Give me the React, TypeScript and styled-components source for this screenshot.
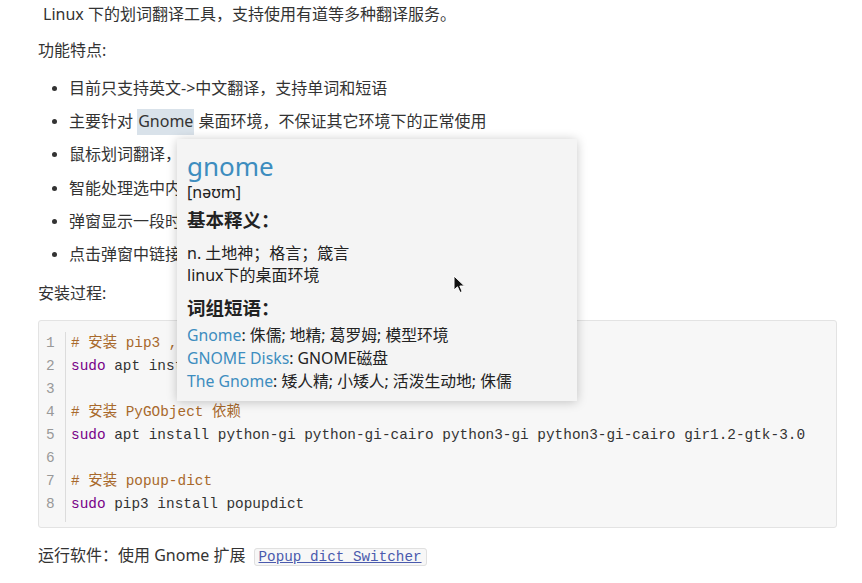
import React from "react";
import styled, { createGlobalStyle } from "styled-components";

const Global = createGlobalStyle`
  html, body { margin: 0; padding: 0; background: #ffffff; }
  body { font-family: "Noto Sans", "Noto Sans CJK SC", sans-serif; color: #333; }
`;

const Page = styled.div`
  position: relative;
  width: 862px;
  height: 583px;
  overflow: hidden;
  box-sizing: border-box;
  padding: 1px 25px 0 38px;
  font-size: 16px;
  line-height: 26px;
`;

const Para = styled.p<{ $indent?: number; $mb?: number }>`
  margin: 0 0 ${(p) => p.$mb ?? 10}px 0;
  padding-left: ${(p) => p.$indent ?? 0}px;
  white-space: pre;
`;

const List = styled.ul`
  margin: 12px 0 13px 0;
  padding-left: 31px;
  list-style: disc;
`;

const Item = styled.li`
  margin-bottom: 7.2px;
  white-space: nowrap;
  &:last-child { margin-bottom: 0; }
  &::marker { font-size: 14px; color: #333; }
`;

const Sel = styled.span`
  background: #d9e2ea;
  padding: 1px 1px 3px;
`;

const CodeBlock = styled.div`
  margin: 14px 0 14px 0;
  background: #f7f7f7;
  border: 1px solid #e3e3e3;
  border-radius: 3px;
  padding: 11px 0 11px 0;
  display: flex;
  font-family: "Liberation Mono", monospace;
  font-size: 14.4px;
  line-height: 23px;
`;

const Gutter = styled.div`
  width: 27px;
  border-right: 1px solid #dcdcdc;
  margin-bottom: -6px;
  padding-bottom: 6px;
  color: #999;
  display: flex;
  flex-direction: column;
  align-items: flex-start;
  padding-left: 7px;
  box-sizing: border-box;
`;

const Lines = styled.div`
  padding-left: 5px;
  display: flex;
  flex-direction: column;
  white-space: pre;
  color: #333;
`;

const Line = styled.div`
  height: 23px;
`;

const Comment = styled.span`
  color: #a8692c;
  font-family: "Liberation Mono", "Noto Sans CJK SC", monospace;
`;

const Kw = styled.span`
  color: #770088;
`;

const InlineCode = styled.code`
  font-family: "Liberation Mono", monospace;
  font-size: 14.3px;
  background: #f7f7f7;
  border: 1px solid #e0e0e0;
  border-radius: 3px;
  padding: 0 4px;
  margin-left: 8px;
  color: #4a5aad;
  text-decoration: underline;
`;

const Popup = styled.div`
  position: absolute;
  left: 177px;
  top: 139px;
  width: 400px;
  height: 262px;
  box-sizing: border-box;
  background: #f4f4f4;
  box-shadow: 0 1px 10px rgba(0, 0, 0, 0.22);
  padding: 0 10px;
  font-family: "Noto Sans", "Noto Sans CJK SC", sans-serif;
  color: #222;
  display: flex;
  flex-direction: column;
`;

const Word = styled.div`
  font-size: 26px;
  line-height: 30px;
  color: #3d8dbf;
  margin-top: 12px;
`;

const Phonetic = styled.div`
  font-size: 16px;
  line-height: 22px;
`;

const Heading = styled.div<{ $mt: number; $mb: number }>`
  font-size: 18.5px;
  font-weight: 700;
  line-height: 26px;
  margin-top: ${(p) => p.$mt}px;
  margin-bottom: ${(p) => p.$mb}px;
`;

const Def = styled.div`
  font-size: 16px;
  line-height: 22px;
`;

const Phrase = styled.div`
  font-size: 15.8px;
  line-height: 23px;
`;

const PhraseKey = styled.span`
  color: #3d8dbf;
`;

const Cursor = styled.svg`
  position: absolute;
  left: 453px;
  top: 275px;
`;

const codeLines: React.ReactNode[] = [
  <Comment># 安装 pip3 , 如已安装可跳过</Comment>,
  <><Kw>sudo</Kw> apt install python3-pip</>,
  "",
  <Comment># 安装 PyGObject 依赖</Comment>,
  <><Kw>sudo</Kw> apt install python-gi python-gi-cairo python3-gi python3-gi-cairo gir1.2-gtk-3.0</>,
  "",
  <Comment># 安装 popup-dict</Comment>,
  <><Kw>sudo</Kw> pip3 install popupdict</>,
];

const phrases: [string, string][] = [
  ["Gnome", ": 侏儒; 地精; 葛罗姆; 模型环境"],
  ["GNOME Disks", ": GNOME磁盘"],
  ["The Gnome", ": 矮人精; 小矮人; 活泼生动地; 侏儒"],
];

export default function App() {
  return (
    <Page>
      <Global />
      <Para $indent={5}>Linux 下的划词翻译工具，支持使用有道等多种翻译服务。</Para>
      <Para $mb={0}>功能特点:</Para>
      <List>
        <Item>目前只支持英文-&gt;中文翻译，支持单词和短语</Item>
        <Item>
          主要针对 <Sel>Gnome</Sel> 桌面环境，不保证其它环境下的正常使用
        </Item>
        <Item>鼠标划词翻译，弹窗显示翻译结果</Item>
        <Item>智能处理选中内容（去除换行、连字符、多余空格以及标点等)</Item>
        <Item>弹窗显示一段时间后自动消失</Item>
        <Item>点击弹窗中链接可打开完整释义</Item>
      </List>
      <Para $mb={0}>安装过程:</Para>
      <CodeBlock>
        <Gutter>
          {codeLines.map((_, i) => (
            <Line key={i}>{i + 1}</Line>
          ))}
        </Gutter>
        <Lines>
          {codeLines.map((l, i) => (
            <Line key={i}>{l}</Line>
          ))}
        </Lines>
      </CodeBlock>
      <Para $mb={0}>
        运行软件：使用 Gnome 扩展<InlineCode>Popup dict Switcher</InlineCode>
      </Para>

      <Popup>
        <Word>gnome</Word>
        <Phonetic>[nəʊm]</Phonetic>
        <Heading $mt={4} $mb={9}>基本释义：</Heading>
        <Def>n. 土地神；格言；箴言</Def>
        <Def>linux下的桌面环境</Def>
        <Heading $mt={9} $mb={3}>词组短语：</Heading>
        {phrases.map(([k, v]) => (
          <Phrase key={k}>
            <PhraseKey>{k}</PhraseKey>
            {v}
          </Phrase>
        ))}
      </Popup>
      <Cursor width="14" height="20" viewBox="0 0 14 20">
        <path d="M1 1 L1 15 L4.5 11.8 L7 17.5 L9.2 16.5 L6.8 11 L11.5 11 Z" fill="#111" stroke="#fff" strokeWidth="1" />
      </Cursor>
    </Page>
  );
}
